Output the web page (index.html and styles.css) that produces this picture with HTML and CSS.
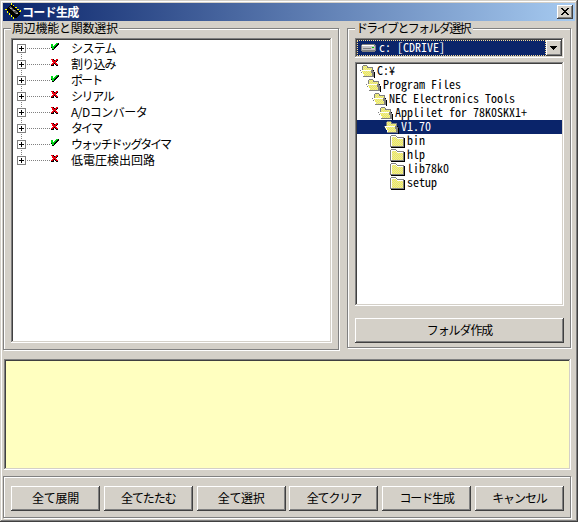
FILE: index.html
```html
<!DOCTYPE html>
<html lang="ja">
<head>
<meta charset="utf-8">
<title>コード生成</title>
<link rel="stylesheet" href="styles.css">
</head>
<body>
<svg class="defs" aria-hidden="true">
  <defs>
    <symbol id="check" viewBox="0 0 8 7">
      <path fill="#000" d="M6 0h2v2H7v1H6v1H5v1H4v1H3v1H1V5H0V1h2v2h2V2h1V1h1z"/>
      <path fill="#00d818" d="M5 0h2v1H6v1H5v1H4v1H3v2H1V4H0V1h2v2h1V2h1V1h1z"/>
    </symbol>
    <symbol id="cross" viewBox="0 0 8 7">
      <path fill="#000" d="M1 0h2v1h2V0h2v2H6v1H5v1h1v1h1v2H5V6H4V5H3v2H0V6h1V4h1V3H1z"/>
      <path fill="#f00010" d="M0 0h2v1h1v1h1V1h1V0h2v1H6v1H5v2h1v1h1v1H5V5H4V4H3v1H2v1H0V5h1V4h1V3H1V1H0z"/>
    </symbol>
    <symbol id="open" viewBox="0 0 16 13">
      <path fill="#000" d="M13 5h1v2h1v6h-1V9h-1z"/>
      <path fill="#808080" d="M3 0h4v1h1v1h5v4h1v6H3V9H2V8H1V6H0V5h2V1h1z"/>
      <path fill="#f2ee50" d="M3 1h4v2h5v2H3zM2 6h9v2h1v3H4V9H3V7H2z"/>
      <path fill="#fff" d="M1 5h10v1H2v1h1v2h1v2H3V9H2V7H1z"/>
      <path class="dither" d="M3 1.5h4M4 2.5h3M3 3.5h9M4 4.5h8M3 6.5h8M4 7.5h7M5 8.5h7M4 9.5h8M5 10.5h7"/>
    </symbol>
    <symbol id="closed" viewBox="0 0 16 13">
      <path fill="#000" d="M14 3h1v10H1v-1h13z"/>
      <path fill="#808080" d="M1 0h5v1h1v1h7v10H0V1h1z"/>
      <path fill="#fff" d="M1 1h5v1h1v1h6v1H2v7H1z"/>
      <path fill="#f2ee50" d="M2 2h4v1h1v1h6v7H2z"/>
      <path class="dither" d="M2 2.5h4M3 3.5h4M2 4.5h11M3 5.5h10M2 6.5h11M3 7.5h10M2 8.5h11M3 9.5h10M2 10.5h11"/>
    </symbol>
  </defs>
</svg>
<main class="window">
  <header class="titlebar">
    <svg class="chip" viewBox="0 0 17 18">
      <path fill="none" stroke="#ffff00" stroke-width="2" stroke-dasharray="1.3 1.5" d="M6 1 16.5 9.5M.5 6l9.5 10"/>
      <path fill="#000" d="M5 2h2l8 7v2l-4 4H9L2 8V5z"/>
      <path fill="#505050" d="M5 3 14 10l-3 1-7-6z"/>
      <path fill="#b0b0b0" d="M5 5h2v1H5zM8 7h2v1H8zM11 10h2v1h-2z"/>
    </svg>
    <h1 class="title">コード生成</h1>
    <button class="close" aria-label="閉じる"><svg viewBox="0 0 8 7"><path d="M0 0h2v1h1v1h2V1h1V0h2v1H7v1H6v1H5v1h1v1h1v1h1v1H6V6H5V5H3v1H2v1H0V6h1V5h1V4h1V3H2V2H1V1H0z"/></svg></button>
  </header>
  <div class="panels">
    <section class="group functions">
      <h2 class="caption"><span>周辺機能と関数選択</span></h2>
      <ul class="tree">
        <li><i class="plus"></i><i class="dots"></i><svg class="mark"><use href="#check"/></svg><span class="k4">システム</span></li>
        <li><i class="plus"></i><i class="dots"></i><svg class="mark"><use href="#cross"/></svg><span class="mixed">割り込み</span></li>
        <li><i class="plus"></i><i class="dots"></i><svg class="mark"><use href="#check"/></svg><span class="k3">ポート</span></li>
        <li><i class="plus"></i><i class="dots"></i><svg class="mark"><use href="#cross"/></svg><span class="kana">シリアル</span></li>
        <li><i class="plus"></i><i class="dots"></i><svg class="mark"><use href="#cross"/></svg><span class="adc">A/Dコンバータ</span></li>
        <li><i class="plus"></i><i class="dots"></i><svg class="mark"><use href="#cross"/></svg><span class="k3">タイマ</span></li>
        <li><i class="plus"></i><i class="dots"></i><svg class="mark"><use href="#check"/></svg><span class="long">ウォッチドッグタイマ</span></li>
        <li><i class="plus"></i><i class="dots"></i><svg class="mark"><use href="#cross"/></svg><span>低電圧検出回路</span></li>
      </ul>
    </section>
    <section class="group folders">
      <h2 class="caption"><span>ドライブとフォルダ選択</span></h2>
      <div class="combo">
        <div class="value">
          <svg class="drive" viewBox="0 0 15 8"><path fill="#808080" d="M1 0h13v1h1v6h-1v1H1V7H0V1h1z"/><path fill="#fff" d="M1 1h12v1H1z"/><path fill="#c6c3c6" d="M1 2h13v4H1z"/><path fill="#808080" d="M2 4h8v1H2z"/><path fill="#0c0" d="M11 3h2v1h-2z"/></svg>
          <span>c: [CDRIVE]</span>
        </div>
        <button class="drop" aria-label="ドライブ"><svg viewBox="0 0 7 4"><path d="M0 0h7v1H6v1H5v1H4v1H3V3H2V2H1V1H0z"/></svg></button>
      </div>
      <ul class="dirs">
        <li class="d0"><svg><use href="#open"/></svg><span>C:¥</span></li>
        <li class="d1"><svg><use href="#open"/></svg><span>Program Files</span></li>
        <li class="d2"><svg><use href="#open"/></svg><span>NEC Electronics Tools</span></li>
        <li class="d3"><svg><use href="#open"/></svg><span>Applilet for 78K0SKX1+</span></li>
        <li class="d4 selected"><svg><use href="#open"/></svg><span>V1.70</span></li>
        <li class="d5"><svg><use href="#closed"/></svg><span>bin</span></li>
        <li class="d5"><svg><use href="#closed"/></svg><span>hlp</span></li>
        <li class="d5"><svg><use href="#closed"/></svg><span>lib78k0</span></li>
        <li class="d5"><svg><use href="#closed"/></svg><span>setup</span></li>
      </ul>
      <button class="button">フォルダ作成</button>
    </section>
  </div>
  <div class="log"></div>
  <footer class="group actions">
    <button class="button wide">全て展開</button>
    <button class="button">全てたたむ</button>
    <button class="button wide">全て選択</button>
    <button class="button">全てクリア</button>
    <button class="button">コード生成</button>
    <button class="button">キャンセル</button>
  </footer>
</main>
</body>
</html>
```
FILE: styles.css
```css
* { box-sizing: border-box; margin: 0; padding: 0; }
body {
  width: 578px;
  height: 522px;
  overflow: hidden;
  font: 12px/16px "Noto Sans CJK JP", sans-serif;
  color: #000;
}
svg { display: block; shape-rendering: crispEdges; flex: none; }
ul { list-style: none; }
button { font: inherit; color: inherit; border: 0; border-radius: 0; background: #d4d0c8; }
h1, h2 { font-size: 12px; font-weight: normal; }
span { white-space: pre; }
.defs { position: absolute; width: 0; height: 0; }
.dither { fill: none; stroke: #e6e4a8; stroke-width: 1; stroke-dasharray: 1 1; shape-rendering: auto; }

.window {
  width: 578px;
  height: 522px;
  padding: 3px;
  background: #d4d0c8;
  box-shadow: inset -1px -1px #404040, inset 1px 1px #d4d0c8, inset -2px -2px #808080, inset 2px 2px #fff;
}
.titlebar {
  display: flex;
  align-items: center;
  height: 18px;
  padding: 0 2px;
  background: linear-gradient(90deg, #0a246a, #a6caf0);
}
.chip { width: 17px; height: 18px; }
.title { flex: 1; color: #fff; font-weight: bold; letter-spacing: -.7px; line-height: 18px; }
.close { display: grid; place-items: center; width: 16px; height: 14px; padding-bottom: 1px; }
.close svg { width: 8px; height: 7px; }
.close, .drop, .button {
  box-shadow: inset -1px -1px #404040, inset 1px 1px #fff, inset -2px -2px #808080;
}

.group { border: 1px solid #808080; box-shadow: 1px 1px #fff, inset 1px 1px #fff; }
.panels { display: flex; align-items: flex-start; gap: 8px; height: 338px; padding-top: 7px; }
.functions { width: 336px; height: 322px; padding: 0 7px; }
.folders { width: 224px; height: 320px; padding: 0 7px; }
.caption { display: flex; height: 14px; margin-top: -7px; }
.caption span { height: 14px; padding: 0 1px; line-height: 12px; background: #d4d0c8; letter-spacing: -.25px; }
.folders .caption span { letter-spacing: -1.65px; padding-right: 3px; }

.tree, .combo, .dirs, .log {
  background: #fff;
  box-shadow: inset -1px -1px #fff, inset 1px 1px #808080, inset -2px -2px #d4d0c8, inset 2px 2px #404040;
}
.tree { width: 321px; height: 305px; margin-top: 2px; padding: 2px 6px; }
.tree li {
  display: flex;
  align-items: center;
  height: 16px;
  background: repeating-linear-gradient(#808080 0 1px, transparent 1px 2px) 4px 0 / 1px 16px no-repeat;
}
.tree li:first-child { background-position: 4px 8px; }
.tree li:last-child { background-size: 1px 8px; }
.plus {
  width: 9px;
  height: 9px;
  margin-top: 1px;
  border: 1px solid #808080;
  background: linear-gradient(#000, #000) 1px 3px / 5px 1px no-repeat, linear-gradient(#000, #000) 3px 1px / 1px 5px no-repeat, #fff;
}
.dots { width: 24px; height: 1px; margin: 1px 0 0 1px; background: repeating-linear-gradient(90deg, #808080 0 1px, transparent 1px 2px); }
.mark { width: 8px; height: 7px; margin: 0 12px 3px 0; }
.tree span { line-height: 16px; }
.k4 { letter-spacing: -.6px; }
.k3 { letter-spacing: -1.9px; }
.kana { letter-spacing: -1.4px; }
.mixed { letter-spacing: -.8px; }
.adc { letter-spacing: -.5px; }
.long { letter-spacing: -2.1px; }

.combo { display: flex; width: 209px; height: 20px; margin-top: 2px; padding: 2px; }
.value, .dirs { font-feature-settings: "hwid"; }
.value { display: flex; align-items: center; flex: 1; gap: 3px; padding-left: 3px; border: 1px dotted #f5db95; background: #0a246a; color: #fff; }
.value span { line-height: 14px; margin-bottom: 2px; }
.drive { width: 15px; height: 8px; }
.drop { display: grid; place-items: center; width: 16px; height: 16px; padding-right: 1px; }
.drop svg { width: 7px; height: 4px; }
.dirs { width: 209px; height: 244px; margin-top: 4px; padding: 2px; }
.dirs li { display: flex; align-items: flex-start; height: 14px; gap: 1px; line-height: 12px; }
.dirs svg { width: 16px; height: 13px; margin-top: 1px; }
.dirs .selected { background: #0a246a; color: #fff; }
.d0 { padding-left: 3px; }
.d1 { padding-left: 9px; }
.d2 { padding-left: 15px; }
.d3 { padding-left: 21px; }
.d4 { padding-left: 27px; }
.d5 { padding-left: 33px; }

.button { height: 25px; padding-bottom: 1px; letter-spacing: -1.1px; }
.button.wide { letter-spacing: -.3px; }
.folders .button { width: 209px; margin-top: 12px; }
.log { width: 567px; height: 111px; margin-left: 1px; background: #ffffc0; }
.actions { display: grid; grid-template-columns: repeat(6, 89px); justify-content: space-between; width: 568px; height: 42px; margin-top: 6px; padding: 9px 6px 0 7px; }
```
